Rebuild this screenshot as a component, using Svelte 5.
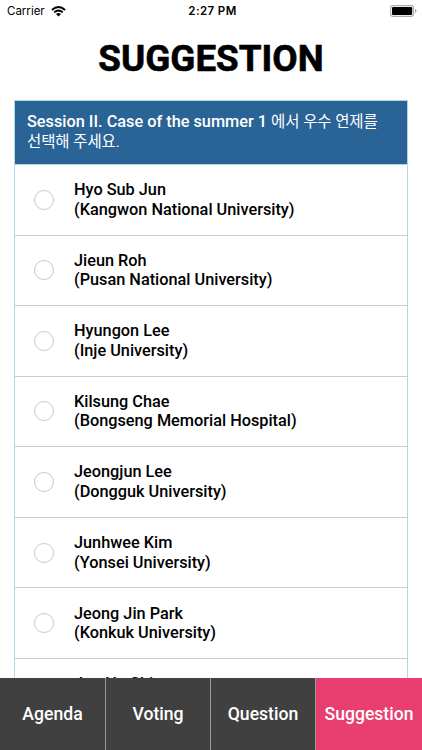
<script>
  const speakers = [
    { name: "Hyo Sub Jun", place: "Kangwon National University" },
    { name: "Jieun Roh", place: "Pusan National University" },
    { name: "Hyungon Lee", place: "Inje University" },
    { name: "Kilsung Chae", place: "Bongseng Memorial Hospital" },
    { name: "Jeongjun Lee", place: "Dongguk University" },
    { name: "Junhwee Kim", place: "Yonsei University" },
    { name: "Jeong Jin Park", place: "Konkuk University" },
    { name: "Jun Ho Shin" },
  ];
  const tabs = ["Agenda", "Voting", "Question", "Suggestion"];
  let selected = $state("");
  let current = $state("Suggestion");
</script>

<div class="screen">
  <header class="status">
    <div class="carrier">
      <span>Carrier</span>
      <svg width="15" height="11" viewBox="0 0 15 11">
        <g fill="none" stroke="#000" stroke-width="1.9">
          <path d="M0.9 4Q7.5 -1.9 14.1 4" />
          <path d="M3.2 6.4Q7.5 2.7 11.8 6.4" />
        </g>
        <path d="M5 8Q7.5 6 10 8L7.5 10.6Z" />
      </svg>
    </div>
    <span class="time">2:27 PM</span>
    <svg class="battery" width="27" height="12" viewBox="0 0 27 12">
      <rect x="0.6" y="0.6" width="23" height="10.8" rx="2.6" fill="#fff" stroke="#aaa" stroke-width="1.1" />
      <rect x="2" y="2" width="20.2" height="8" rx="1.2" />
      <path d="M25 4Q26.6 4.5 26.6 6T25 8Z" fill="#aaa" />
    </svg>
  </header>

  <h1>SUGGESTION</h1>

  <main>
    <div class="question">
      Session II. Case of the summer 1 <span>에서 우수 연제를</span><br />
      <span>선택해 주세요.</span>
    </div>
    {#each speakers as s}
      <label class="row">
        <input type="radio" name="speaker" value={s.name} bind:group={selected} />
        <span>{s.name}<br />{#if s.place}({s.place}){:else}&nbsp;{/if}</span>
      </label>
    {/each}
  </main>

  <nav>
    {#each tabs as tab}
      <button class:active={tab === current} onclick={() => (current = tab)}>{tab}</button>
    {/each}
  </nav>
</div>

<style>
  :global(body) {
    background: #fff;
    overflow: hidden;
  }
  .screen {
    height: 750px;
    display: flex;
    flex-direction: column;
    font-family: Roboto, "Noto Sans CJK KR", sans-serif;
    font-weight: 500;
    color: #000;
  }
  .status {
    flex: none;
    height: 22px;
    display: grid;
    grid-template-columns: 1fr auto 1fr;
    align-items: center;
    padding: 0 5px 0 7px;
    box-sizing: border-box;
    font: 400 11.5px Inter, sans-serif;
  }
  .carrier {
    display: flex;
    align-items: center;
    gap: 6px;
  }
  .time {
    padding-left: 1px;
    font-weight: 600;
    letter-spacing: 0.4px;
  }
  .battery {
    justify-self: end;
  }
  h1 {
    flex: none;
    margin: 0;
    height: 78px;
    line-height: 73px;
    font-size: 36.8px;
    font-weight: 700;
    text-align: center;
    -webkit-text-stroke: 0.6px #000;
  }
  main {
    flex: 1;
    min-height: 0;
    overflow: hidden;
    margin: 0 14px;
    border: 1px solid #add8e6;
    border-bottom: none;
  }
  .question {
    box-sizing: border-box;
    height: 64px;
    padding: 11px 11px 0 12px;
    background: #2a6496;
    border-bottom: 1px solid #add8e6;
    color: #fff;
    font-size: 16.3px;
    line-height: 20px;
    white-space: nowrap;
  }
  .question span {
    font-size: 15.5px;
    font-weight: 400;
    letter-spacing: -0.1px;
  }
  .row {
    box-sizing: border-box;
    height: 70.55px;
    display: flex;
    align-items: center;
    padding-left: 19px;
    border-bottom: 1px solid #ccc;
    font-size: 16.3px;
    line-height: 19.5px;
  }
  input {
    appearance: none;
    flex: none;
    box-sizing: border-box;
    width: 20px;
    height: 20px;
    margin: 0 20px 0 0;
    border: 1px solid #c8c8c8;
    border-radius: 50%;
  }
  input:checked {
    background: #2a6496;
    box-shadow: inset 0 0 0 4px #fff;
  }
  nav {
    flex: none;
    height: 72px;
    display: grid;
    grid-template-columns: 106px 105px 105px 1fr;
  }
  button {
    min-width: 0;
    padding: 0;
    border: none;
    border-right: 1px solid #999;
    background: #404040;
    color: #fff;
    font: inherit;
    font-size: 17.6px;
    line-height: 20px;
  }
  button:last-child {
    border-right: none;
  }
  button.active {
    background: #e83e70;
  }
</style>
